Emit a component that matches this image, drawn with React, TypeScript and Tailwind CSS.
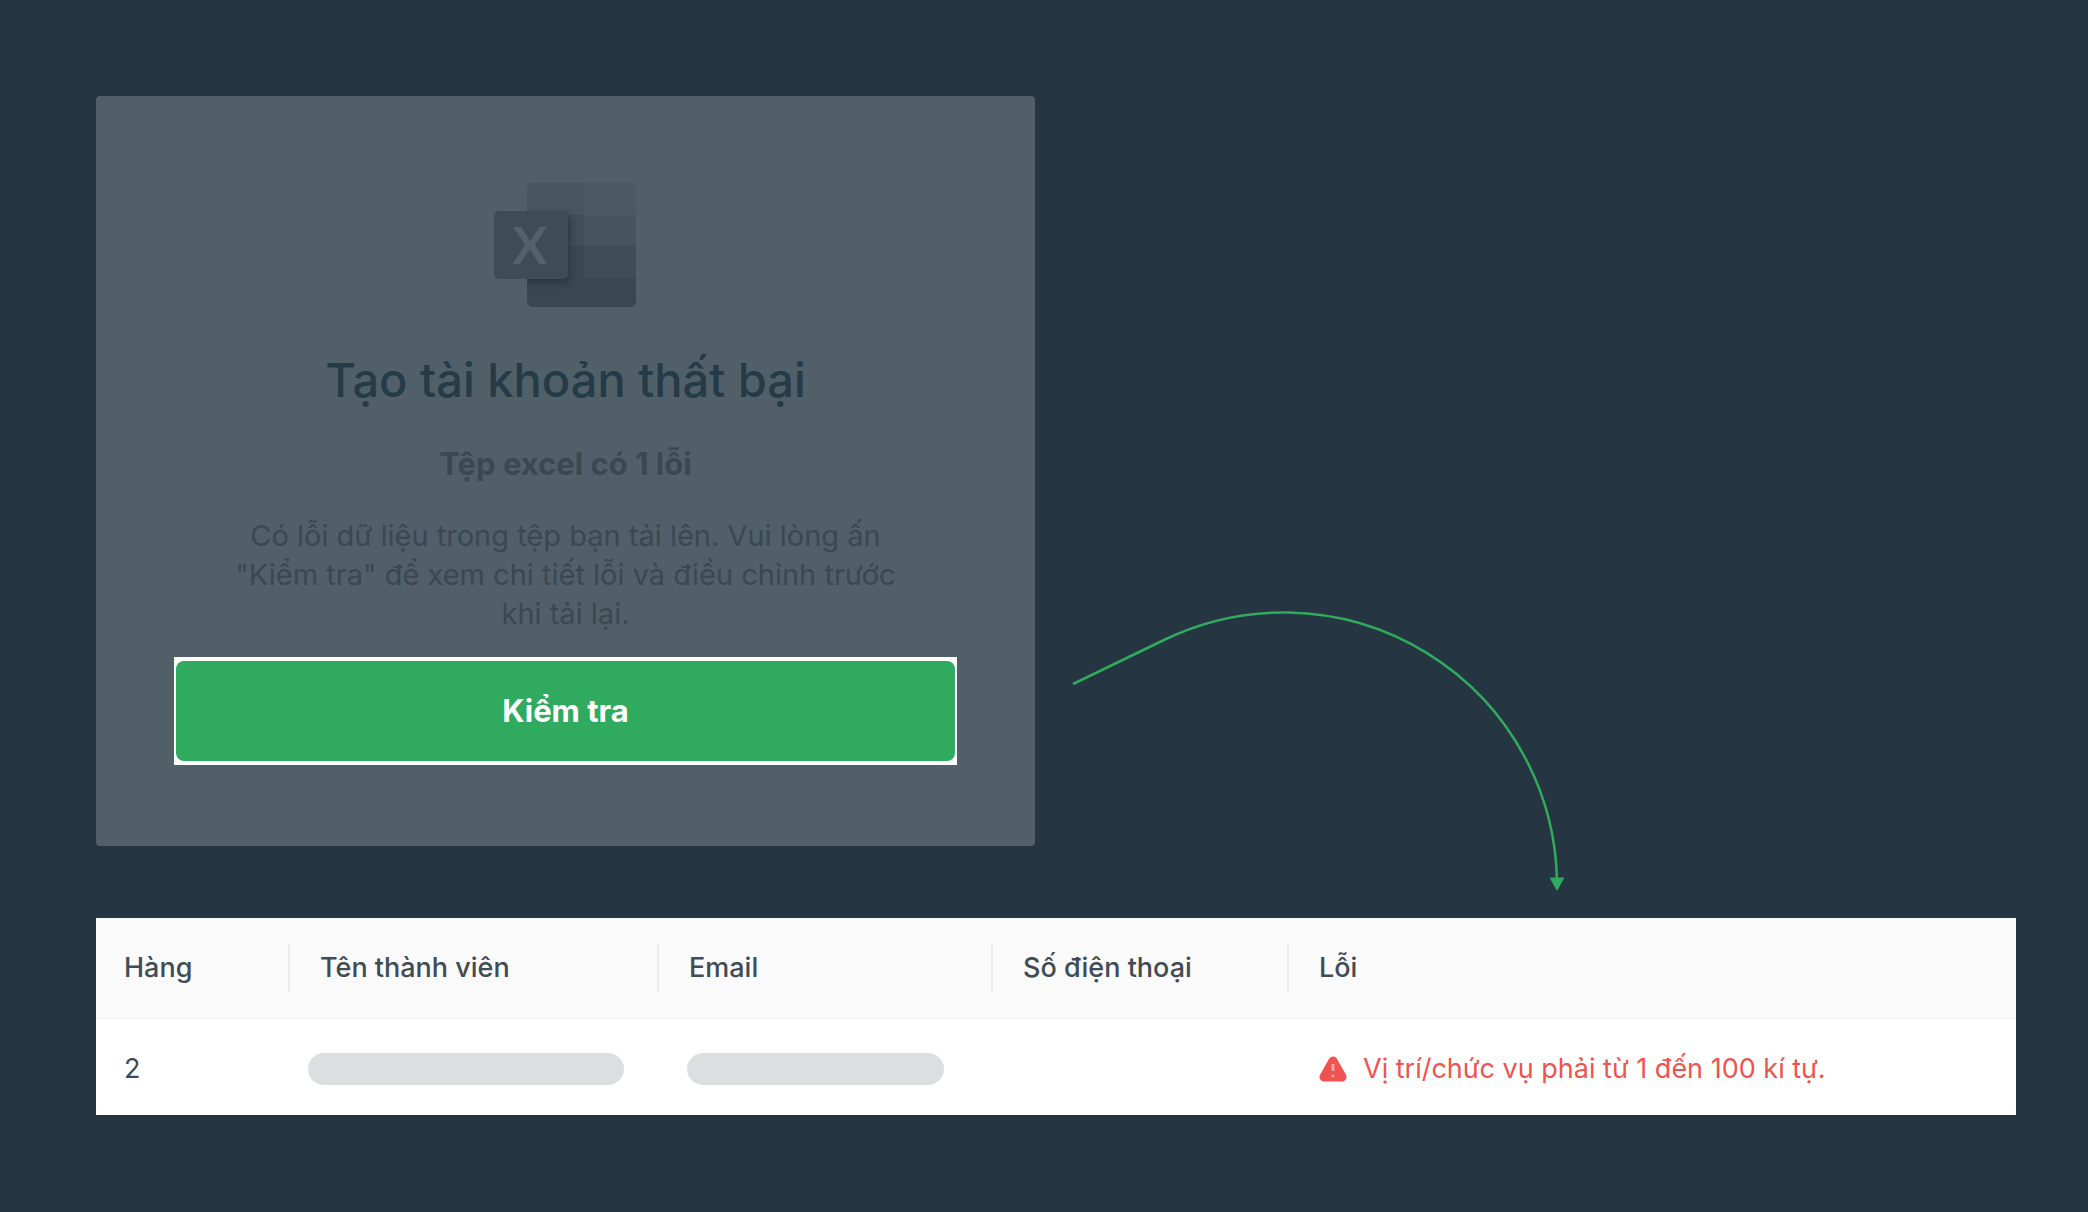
function ExcelLogo() {
    return (
        <svg viewBox="0 0 144 128" className="h-32 w-36" aria-hidden="true">
            <defs>
                <clipPath id="sheet">
                    <rect x="33" y="3" width="109" height="124" rx="6" />
                </clipPath>
                <filter id="soft" x="-30%" y="-30%" width="160%" height="160%">
                    <feGaussianBlur stdDeviation="3" />
                </filter>
            </defs>
            <g clipPath="url(#sheet)">
                <rect x="33" y="3" width="57" height="32" fill="#46555e" />
                <rect x="90" y="3" width="52" height="32" fill="#4b5962" />
                <rect x="33" y="35" width="57" height="31" fill="#414e57" />
                <rect x="90" y="35" width="52" height="31" fill="#46545e" />
                <rect x="33" y="66" width="57" height="32" fill="#3b4750" />
                <rect x="90" y="66" width="52" height="32" fill="#404d57" />
                <rect x="33" y="98" width="109" height="29" fill="#3b4750" />
                <rect x="3" y="35" width="73" height="68" rx="5" fill="#263943" filter="url(#soft)" />
            </g>
            <rect x="0" y="31" width="74" height="68" rx="5" fill="#3f4c56" />
            <text x="36" y="84" textAnchor="middle" fill="#53616a" className="font-['Lato','Liberation_Sans',sans-serif] text-[52px] font-bold">
                X
            </text>
        </svg>
    );
}

function WarningIcon() {
    return (
        <svg viewBox="0 0 28 26" className="h-[26px] w-7 shrink-0" aria-hidden="true">
            <path d="M14 5L23 21H5Z" fill="#ef5350" stroke="#ef5350" strokeWidth="9" strokeLinejoin="round" />
            <path d="M14 8V15" stroke="#f7a5a3" strokeWidth="3" />
            <circle cx="14" cy="20" r="1.5" fill="#f7a5a3" />
        </svg>
    );
}

function Arrow() {
    return (
        <svg viewBox="0 0 496 284" className="-mb-[46px] ml-9 h-[284px] w-[496px] self-end" aria-hidden="true">
            <path d="M2 76L94 31.500A273.500 273.500 0 0 1 486 272" fill="none" stroke="#30aa5f" strokeWidth="2.5" />
            <path d="M478.500 269.500H493.500L486 283Z" fill="#30aa5f" />
        </svg>
    );
}

const columns = ["Hàng", "Tên thành viên", "Email", "Số điện thoại", "Lỗi"];

export default function App() {
    return (
        <main className="min-h-screen bg-[#253642] pt-24 pr-[72px] pb-24 pl-24 font-['Inter','Liberation_Sans',sans-serif]">
            <div className="grid grid-cols-[939fr_981fr]">
                {/* Result dialog */}
                <section className="flex flex-col items-center rounded-sm bg-[#515f68] px-[78px] pt-[84px] pb-[81px] text-center">
                    <ExcelLogo />
                    <h1 className="mt-10 text-[47px] leading-[64px] font-medium text-[#253b48]">Tạo tài khoản thất bại</h1>
                    <h2 className="mt-8 text-[31px] leading-10 font-bold text-[#3b4852]">Tệp excel có 1 lỗi</h2>
                    <p className="mt-8 max-w-[680px] text-[29px] leading-[39px] text-[#3b4852]">
                        Có lỗi dữ liệu trong tệp bạn tải lên. Vui lòng ấn "Kiểm tra" để xem chi tiết lỗi và điều chỉnh trước khi tải lại.
                    </p>
                    <div className="mt-6 w-full bg-white px-0.5 py-1">
                        <button type="button" className="h-[100px] w-full rounded-lg bg-[#30aa5f] text-[31px] font-bold text-white">
                            Kiểm tra
                        </button>
                    </div>
                </section>
                <Arrow />
            </div>

            {/* Error list */}
            <table className="mt-[72px] w-full table-fixed bg-white text-left text-[27px] leading-10 text-[#3f4c56]">
                <colgroup>
                    <col className="w-[194px]" />
                    <col className="w-[369px]" />
                    <col className="w-[334px]" />
                    <col className="w-[296px]" />
                    <col />
                </colgroup>
                <thead>
                    <tr className="h-[100px] border-b-2 border-[#f5f5f5] bg-[#fafafa]">
                        {columns.map((name) => (
                            <th key={name} className="group p-0 font-medium">
                                <div className="flex h-12 items-center border-r-2 border-[#ebebeb] pl-[30px] group-first:pl-7 group-last:border-r-0">
                                    {name}
                                </div>
                            </th>
                        ))}
                    </tr>
                </thead>
                <tbody>
                    <tr className="h-[97px]">
                        <td className="pt-1 pl-7">2</td>
                        <td className="pt-1 pl-[18px]">
                            <div className="h-8 w-[316px] rounded-full bg-[#dddee0]" />
                        </td>
                        <td className="pt-1 pl-7">
                            <div className="h-8 w-[257px] rounded-full bg-[#dddee0]" />
                        </td>
                        <td />
                        <td className="pt-1 pl-[30px]">
                            <div className="flex items-center gap-4 text-[#ef5350]">
                                <WarningIcon />
                                <span>Vị trí/chức vụ phải từ 1 đến 100 kí tự.</span>
                            </div>
                        </td>
                    </tr>
                </tbody>
            </table>
        </main>
    );
}
